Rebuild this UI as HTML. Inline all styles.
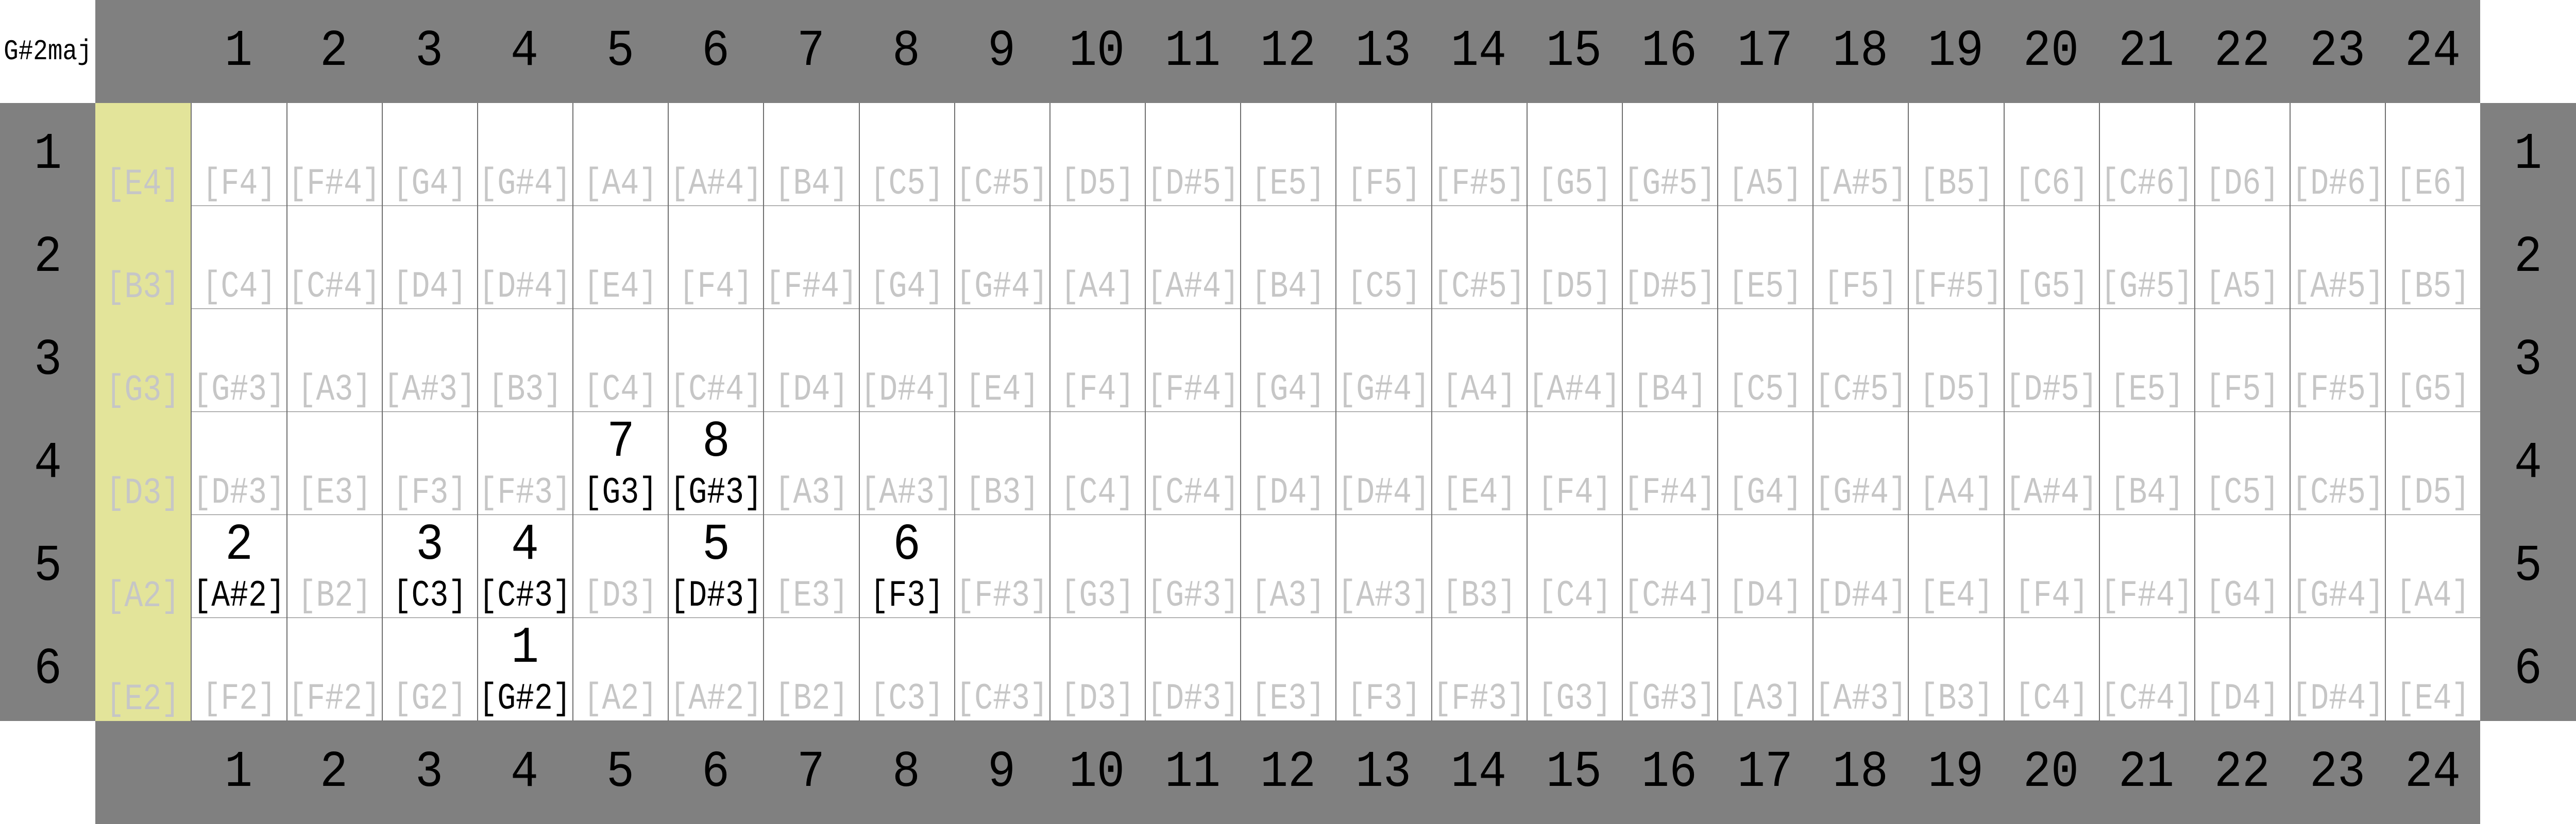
<!DOCTYPE html>
<html style="margin:0;width:100vw;height:100vh;overflow:hidden"><head><meta charset="utf-8"><style>
body{margin:0;width:100vw;height:100vh;overflow:hidden;display:grid;grid-template-columns:repeat(27,calc(100vw / 27));grid-template-rows:repeat(8,12.5vh);font-family:"Liberation Mono",monospace;background:#fff}
body>div{overflow:hidden;min-width:0;min-height:0}
.w{background:#fff}
.t{background:#fff;display:flex;align-items:center;justify-content:center;font-size:3.5vh;color:#000}
.t span{display:inline-block;transform:scaleX(.85)}
.g{background:#808080;display:flex;align-items:center;justify-content:center;font-size:6.25vh;color:#000}
.g span{display:inline-block;transform:scaleX(.9)}
.c{position:relative;box-sizing:border-box;border-left:0.125vh solid #707070;border-bottom:0.07vh solid #707070;background:#fff}
.o{position:relative;background:#e3e49a}
.c i,.o i,.c b{position:absolute;left:0;right:0;bottom:0.375vh;font-style:normal;font-weight:normal;font-size:4.5vh;line-height:4.5vh;color:#c6c6c6;white-space:nowrap;display:flex;justify-content:center}
.c i span,.o i span,.c b span{display:inline-block;flex:none;transform:scaleX(.83)}
.c b{color:#000}
.c u{position:absolute;left:0;right:0;top:0.625vh;text-align:center;text-decoration:none;font-size:6.25vh;line-height:6.25vh;color:#000}
.c u span{display:inline-block;transform:scaleX(.9)}
</style></head><body>
<div class="t"><span>G#2maj</span></div><div class="g"></div>
<div class="g"><span>1</span></div><div class="g"><span>2</span></div><div class="g"><span>3</span></div><div class="g"><span>4</span></div><div class="g"><span>5</span></div><div class="g"><span>6</span></div><div class="g"><span>7</span></div><div class="g"><span>8</span></div><div class="g"><span>9</span></div><div class="g"><span>10</span></div><div class="g"><span>11</span></div><div class="g"><span>12</span></div><div class="g"><span>13</span></div><div class="g"><span>14</span></div><div class="g"><span>15</span></div><div class="g"><span>16</span></div><div class="g"><span>17</span></div><div class="g"><span>18</span></div><div class="g"><span>19</span></div><div class="g"><span>20</span></div><div class="g"><span>21</span></div><div class="g"><span>22</span></div><div class="g"><span>23</span></div><div class="g"><span>24</span></div>
<div class="w"></div>

<div class="g"><span>1</span></div>
<div class="o"><i><span>[E4]</span></i></div>
<div class="c"><i><span>[F4]</span></i></div><div class="c"><i><span>[F#4]</span></i></div><div class="c"><i><span>[G4]</span></i></div><div class="c"><i><span>[G#4]</span></i></div><div class="c"><i><span>[A4]</span></i></div><div class="c"><i><span>[A#4]</span></i></div><div class="c"><i><span>[B4]</span></i></div><div class="c"><i><span>[C5]</span></i></div><div class="c"><i><span>[C#5]</span></i></div><div class="c"><i><span>[D5]</span></i></div><div class="c"><i><span>[D#5]</span></i></div><div class="c"><i><span>[E5]</span></i></div><div class="c"><i><span>[F5]</span></i></div><div class="c"><i><span>[F#5]</span></i></div><div class="c"><i><span>[G5]</span></i></div><div class="c"><i><span>[G#5]</span></i></div><div class="c"><i><span>[A5]</span></i></div><div class="c"><i><span>[A#5]</span></i></div><div class="c"><i><span>[B5]</span></i></div><div class="c"><i><span>[C6]</span></i></div><div class="c"><i><span>[C#6]</span></i></div><div class="c"><i><span>[D6]</span></i></div><div class="c"><i><span>[D#6]</span></i></div><div class="c"><i><span>[E6]</span></i></div>
<div class="g"><span>1</span></div>

<div class="g"><span>2</span></div>
<div class="o"><i><span>[B3]</span></i></div>
<div class="c"><i><span>[C4]</span></i></div><div class="c"><i><span>[C#4]</span></i></div><div class="c"><i><span>[D4]</span></i></div><div class="c"><i><span>[D#4]</span></i></div><div class="c"><i><span>[E4]</span></i></div><div class="c"><i><span>[F4]</span></i></div><div class="c"><i><span>[F#4]</span></i></div><div class="c"><i><span>[G4]</span></i></div><div class="c"><i><span>[G#4]</span></i></div><div class="c"><i><span>[A4]</span></i></div><div class="c"><i><span>[A#4]</span></i></div><div class="c"><i><span>[B4]</span></i></div><div class="c"><i><span>[C5]</span></i></div><div class="c"><i><span>[C#5]</span></i></div><div class="c"><i><span>[D5]</span></i></div><div class="c"><i><span>[D#5]</span></i></div><div class="c"><i><span>[E5]</span></i></div><div class="c"><i><span>[F5]</span></i></div><div class="c"><i><span>[F#5]</span></i></div><div class="c"><i><span>[G5]</span></i></div><div class="c"><i><span>[G#5]</span></i></div><div class="c"><i><span>[A5]</span></i></div><div class="c"><i><span>[A#5]</span></i></div><div class="c"><i><span>[B5]</span></i></div>
<div class="g"><span>2</span></div>

<div class="g"><span>3</span></div>
<div class="o"><i><span>[G3]</span></i></div>
<div class="c"><i><span>[G#3]</span></i></div><div class="c"><i><span>[A3]</span></i></div><div class="c"><i><span>[A#3]</span></i></div><div class="c"><i><span>[B3]</span></i></div><div class="c"><i><span>[C4]</span></i></div><div class="c"><i><span>[C#4]</span></i></div><div class="c"><i><span>[D4]</span></i></div><div class="c"><i><span>[D#4]</span></i></div><div class="c"><i><span>[E4]</span></i></div><div class="c"><i><span>[F4]</span></i></div><div class="c"><i><span>[F#4]</span></i></div><div class="c"><i><span>[G4]</span></i></div><div class="c"><i><span>[G#4]</span></i></div><div class="c"><i><span>[A4]</span></i></div><div class="c"><i><span>[A#4]</span></i></div><div class="c"><i><span>[B4]</span></i></div><div class="c"><i><span>[C5]</span></i></div><div class="c"><i><span>[C#5]</span></i></div><div class="c"><i><span>[D5]</span></i></div><div class="c"><i><span>[D#5]</span></i></div><div class="c"><i><span>[E5]</span></i></div><div class="c"><i><span>[F5]</span></i></div><div class="c"><i><span>[F#5]</span></i></div><div class="c"><i><span>[G5]</span></i></div>
<div class="g"><span>3</span></div>

<div class="g"><span>4</span></div>
<div class="o"><i><span>[D3]</span></i></div>
<div class="c"><i><span>[D#3]</span></i></div><div class="c"><i><span>[E3]</span></i></div><div class="c"><i><span>[F3]</span></i></div><div class="c"><i><span>[F#3]</span></i></div><div class="c"><u><span>7</span></u><b><span>[G3]</span></b></div><div class="c"><u><span>8</span></u><b><span>[G#3]</span></b></div><div class="c"><i><span>[A3]</span></i></div><div class="c"><i><span>[A#3]</span></i></div><div class="c"><i><span>[B3]</span></i></div><div class="c"><i><span>[C4]</span></i></div><div class="c"><i><span>[C#4]</span></i></div><div class="c"><i><span>[D4]</span></i></div><div class="c"><i><span>[D#4]</span></i></div><div class="c"><i><span>[E4]</span></i></div><div class="c"><i><span>[F4]</span></i></div><div class="c"><i><span>[F#4]</span></i></div><div class="c"><i><span>[G4]</span></i></div><div class="c"><i><span>[G#4]</span></i></div><div class="c"><i><span>[A4]</span></i></div><div class="c"><i><span>[A#4]</span></i></div><div class="c"><i><span>[B4]</span></i></div><div class="c"><i><span>[C5]</span></i></div><div class="c"><i><span>[C#5]</span></i></div><div class="c"><i><span>[D5]</span></i></div>
<div class="g"><span>4</span></div>

<div class="g"><span>5</span></div>
<div class="o"><i><span>[A2]</span></i></div>
<div class="c"><u><span>2</span></u><b><span>[A#2]</span></b></div><div class="c"><i><span>[B2]</span></i></div><div class="c"><u><span>3</span></u><b><span>[C3]</span></b></div><div class="c"><u><span>4</span></u><b><span>[C#3]</span></b></div><div class="c"><i><span>[D3]</span></i></div><div class="c"><u><span>5</span></u><b><span>[D#3]</span></b></div><div class="c"><i><span>[E3]</span></i></div><div class="c"><u><span>6</span></u><b><span>[F3]</span></b></div><div class="c"><i><span>[F#3]</span></i></div><div class="c"><i><span>[G3]</span></i></div><div class="c"><i><span>[G#3]</span></i></div><div class="c"><i><span>[A3]</span></i></div><div class="c"><i><span>[A#3]</span></i></div><div class="c"><i><span>[B3]</span></i></div><div class="c"><i><span>[C4]</span></i></div><div class="c"><i><span>[C#4]</span></i></div><div class="c"><i><span>[D4]</span></i></div><div class="c"><i><span>[D#4]</span></i></div><div class="c"><i><span>[E4]</span></i></div><div class="c"><i><span>[F4]</span></i></div><div class="c"><i><span>[F#4]</span></i></div><div class="c"><i><span>[G4]</span></i></div><div class="c"><i><span>[G#4]</span></i></div><div class="c"><i><span>[A4]</span></i></div>
<div class="g"><span>5</span></div>

<div class="g"><span>6</span></div>
<div class="o"><i><span>[E2]</span></i></div>
<div class="c"><i><span>[F2]</span></i></div><div class="c"><i><span>[F#2]</span></i></div><div class="c"><i><span>[G2]</span></i></div><div class="c"><u><span>1</span></u><b><span>[G#2]</span></b></div><div class="c"><i><span>[A2]</span></i></div><div class="c"><i><span>[A#2]</span></i></div><div class="c"><i><span>[B2]</span></i></div><div class="c"><i><span>[C3]</span></i></div><div class="c"><i><span>[C#3]</span></i></div><div class="c"><i><span>[D3]</span></i></div><div class="c"><i><span>[D#3]</span></i></div><div class="c"><i><span>[E3]</span></i></div><div class="c"><i><span>[F3]</span></i></div><div class="c"><i><span>[F#3]</span></i></div><div class="c"><i><span>[G3]</span></i></div><div class="c"><i><span>[G#3]</span></i></div><div class="c"><i><span>[A3]</span></i></div><div class="c"><i><span>[A#3]</span></i></div><div class="c"><i><span>[B3]</span></i></div><div class="c"><i><span>[C4]</span></i></div><div class="c"><i><span>[C#4]</span></i></div><div class="c"><i><span>[D4]</span></i></div><div class="c"><i><span>[D#4]</span></i></div><div class="c"><i><span>[E4]</span></i></div>
<div class="g"><span>6</span></div>

<div class="w"></div><div class="g"></div>
<div class="g"><span>1</span></div><div class="g"><span>2</span></div><div class="g"><span>3</span></div><div class="g"><span>4</span></div><div class="g"><span>5</span></div><div class="g"><span>6</span></div><div class="g"><span>7</span></div><div class="g"><span>8</span></div><div class="g"><span>9</span></div><div class="g"><span>10</span></div><div class="g"><span>11</span></div><div class="g"><span>12</span></div><div class="g"><span>13</span></div><div class="g"><span>14</span></div><div class="g"><span>15</span></div><div class="g"><span>16</span></div><div class="g"><span>17</span></div><div class="g"><span>18</span></div><div class="g"><span>19</span></div><div class="g"><span>20</span></div><div class="g"><span>21</span></div><div class="g"><span>22</span></div><div class="g"><span>23</span></div><div class="g"><span>24</span></div>
<div class="w"></div>
</body></html>
